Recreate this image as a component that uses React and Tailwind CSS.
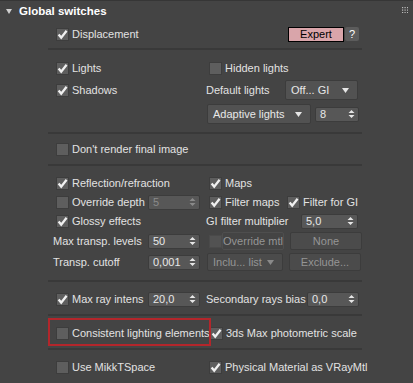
import React from 'react';

const font = { fontFamily: '"Liberation Sans", Arial, sans-serif' };

const Check = ({ on, disabled }) => (
  <span
    className={`flex h-[13px] w-[13px] shrink-0 items-center justify-center border ${
      disabled ? 'border-[#4a4a4a] bg-[#525252]' : 'border-[#3d3d3d] bg-[#5e5e5e]'
    }`}
  >
    {on && (
      <svg width="11" height="11" viewBox="0 0 11 11">
        <path d="M1.6 5.6 L4.2 8.6 L9.6 1.8" fill="none" stroke="#f0f0f0" strokeWidth="2.3" />
      </svg>
    )}
  </span>
);

const CheckLabel = ({ on, children, className = '' }) => (
  <div className={`flex items-center gap-[3px] whitespace-nowrap ${className}`}>
    <Check on={on} />
    <span>{children}</span>
  </div>
);

const Arrows = ({ dim }) => (
  <svg width="7" height="10" viewBox="0 0 7 10" className="shrink-0">
    <path d="M3.5 1 L6.5 4 L0.5 4 Z M0.5 6 L6.5 6 L3.5 9 Z" fill={dim ? '#8a8a8a' : '#e6e6e6'} />
  </svg>
);

const Caret = ({ dim }) => (
  <svg width="7" height="5" viewBox="0 0 7 5" className="shrink-0">
    <path d="M0 0 L7 0 L3.5 5 Z" fill={dim ? '#8a8a8a' : '#e6e6e6'} />
  </svg>
);

const Spinner = ({ value, w, dim }) => (
  <div
    className={`flex h-[15px] items-center justify-between rounded-[2px] border border-[#3c3c3c] bg-[#575757] pl-[4px] pr-[3px] ${w} ${
      dim ? 'text-[#8a8a8a]' : 'text-[#e8e8e8]'
    }`}
  >
    <span>{value}</span>
    <Arrows dim={dim} />
  </div>
);

const Drop = ({ label, w, dim }) => (
  <div
    className={`flex h-[20px] items-center justify-between rounded-[2px] border border-[#3c3c3c] bg-[#525252] pl-[5px] pr-[8px] ${w} ${
      dim ? 'text-[#8a8a8a]' : 'text-[#e8e8e8]'
    }`}
  >
    <span>{label}</span>
    <Caret dim={dim} />
  </div>
);

const Btn = ({ label }) => (
  <div className="flex h-[18px] w-[72px] items-center justify-center rounded-[2px] border border-[#3c3c3c] bg-[#4b4b4b] text-[#959595]">
    {label}
  </div>
);

const Sep = ({ className }) => <div className={`h-[2px] w-[314px] bg-[#393939] ${className}`} />;

const Row = ({ h, left, right }) => (
  <div className={`grid grid-cols-[156px_158px] items-center ${h}`}>
    <div className="flex items-center">{left}</div>
    <div className="flex items-center">{right}</div>
  </div>
);

export default function App() {
  return (
    <div
      className="relative h-[383px] w-[413px] overflow-hidden border-t border-[#363636] bg-[#444444] text-[11px] text-[#e2e2e2]"
      style={font}
    >
      {/* header */}
      <div className="flex h-[21px] items-center justify-between pl-[6px] pr-[5px]">
        <div className="flex items-center gap-[7px]">
          <svg width="6" height="5" viewBox="0 0 6 5">
            <path d="M0 0 L6 0 L3 5 Z" fill="#cfcfcf" />
          </svg>
          <span className="text-[11.5px] font-bold text-white">Global switches</span>
        </div>
        <svg width="6" height="6" viewBox="0 0 6 6" className="-mt-[4px]">
          {[0, 2.5, 5].map((x) =>
            [0, 2.5, 5].map((y) => <rect key={`${x}-${y}`} x={x} y={y} width="1.2" height="1.2" fill="#bdbdbd" />)
          )}
        </svg>
      </div>

      <div className="flex flex-col pl-[48px]">
        <Row
          h="h-[24px]"
          left={<CheckLabel on className="pl-[8px]">Displacement</CheckLabel>}
          right={
            <div className="flex w-full items-center justify-end gap-[1px] pr-[3px]">
              <div className="flex h-[15px] w-[56px] items-center justify-center border border-black bg-[#d9a5aa] text-[11px] text-black">
                Expert
              </div>
              <div className="flex h-[14px] w-[14px] items-center justify-center rounded-[2px] bg-[#5c5c5c] text-white">
                ?
              </div>
            </div>
          }
        />
        <Sep className="mt-[2px]" />

        <div className="mt-[7px]">
          <Row
            h="h-[22px]"
            left={<CheckLabel on className="pl-[8px]">Lights</CheckLabel>}
            right={<CheckLabel className="pl-[5px]">Hidden lights</CheckLabel>}
          />
          <Row
            h="h-[22px]"
            left={<CheckLabel on className="pl-[8px]">Shadows</CheckLabel>}
            right={
              <div className="flex w-full items-center justify-between pl-[2px] pr-[4px]">
                <span>Default lights</span>
                <Drop label="Off... GI" w="w-[73px]" />
              </div>
            }
          />
          <div className="mt-[2px]">
            <Row
              h="h-[22px]"
              left={null}
              right={
                <div className="flex items-center gap-[4px] pl-[3px]">
                  <Drop label="Adaptive lights" w="w-[104px]" />
                  <Spinner value="8" w="w-[44px]" />
                </div>
              }
            />
          </div>
        </div>
        <Sep className="mt-[7px]" />

        <div className="mt-[5px]">
          <Row h="h-[20px]" left={<CheckLabel className="pl-[8px]">Don&apos;t render final image</CheckLabel>} right={null} />
        </div>
        <Sep className="mt-[5px]" />

        <div className="mt-[7px]">
          <Row
            h="h-[20px]"
            left={<CheckLabel on className="pl-[8px]">Reflection/refraction</CheckLabel>}
            right={<CheckLabel on className="pl-[5px]">Maps</CheckLabel>}
          />
          <Row
            h="h-[18px]"
            left={
              <div className="grid grid-cols-[100px_52px] items-center">
                <CheckLabel className="pl-[8px]">Override depth</CheckLabel>
                <Spinner value="5" w="w-[52px]" dim />
              </div>
            }
            right={
              <div className="flex items-center pl-[5px]">
                <CheckLabel on className="w-[78px]">Filter maps</CheckLabel>
                <CheckLabel on>Filter for GI</CheckLabel>
              </div>
            }
          />
          <Row
            h="h-[20px]"
            left={<CheckLabel on className="pl-[8px]">Glossy effects</CheckLabel>}
            right={
              <div className="flex w-full items-center justify-between pl-[2px] pr-[4px]">
                <span>GI filter multiplier</span>
                <Spinner value="5,0" w="w-[57px]" />
              </div>
            }
          />
          <Row
            h="h-[20px]"
            left={
              <div className="grid grid-cols-[100px_52px] items-center">
                <span className="whitespace-nowrap pl-[5px]">Max transp. levels</span>
                <Spinner value="50" w="w-[52px]" />
              </div>
            }
            right={
              <div className="flex w-full items-center gap-[6px] pl-[5px] text-[#959595]">
                <div className="flex items-center">
                  <Check disabled />
                  <span className="flex h-[18px] w-[62px] items-center justify-center rounded-[2px] border border-[#4e4e4e]">
                    Override mtl
                  </span>
                </div>
                <Btn label="None" />
              </div>
            }
          />
          <Row
            h="h-[22px]"
            left={
              <div className="grid grid-cols-[100px_52px] items-center">
                <span className="whitespace-nowrap pl-[5px]">Transp. cutoff</span>
                <Spinner value="0,001" w="w-[52px]" />
              </div>
            }
            right={
              <div className="flex items-center gap-[6px] pl-[3px]">
                <div className="flex h-[18px] w-[76px] items-center justify-between rounded-[2px] border border-[#3c3c3c] bg-[#4b4b4b] pl-[5px] pr-[8px] text-[#959595]">
                  <span>Inclu... list</span>
                  <Caret dim />
                </div>
                <Btn label="Exclude..." />
              </div>
            }
          />
        </div>
        <Sep className="mt-[7px]" />

        <div className="mt-[7px]">
          <Row
            h="h-[20px]"
            left={
              <div className="grid grid-cols-[100px_52px] items-center">
                <CheckLabel on className="pl-[8px]">Max ray intens</CheckLabel>
                <Spinner value="20,0" w="w-[52px]" />
              </div>
            }
            right={
              <div className="flex w-full items-center justify-between pl-[2px] pr-[3px]">
                <span>Secondary rays bias</span>
                <Spinner value="0,0" w="w-[52px]" />
              </div>
            }
          />
        </div>
        <Sep className="mt-[5px]" />

        <div className="relative mt-[5px]">
          <Row
            h="h-[24px]"
            left={<CheckLabel className="pl-[8px]">Consistent lighting elements</CheckLabel>}
            right={<CheckLabel on className="pl-[6px]">3ds Max photometric scale</CheckLabel>}
          />
          <div className="pointer-events-none absolute left-0 top-[-3px] h-[28px] w-[163px] border-2 border-[#b3262b]" />
        </div>
        <Sep className="mt-[3px]" />

        <div className="mt-[7px]">
          <Row
            h="h-[20px]"
            left={<CheckLabel className="pl-[8px]">Use MikkTSpace</CheckLabel>}
            right={<CheckLabel on className="pl-[5px]">Physical Material as VRayMtl</CheckLabel>}
          />
        </div>
      </div>
    </div>
  );
}
